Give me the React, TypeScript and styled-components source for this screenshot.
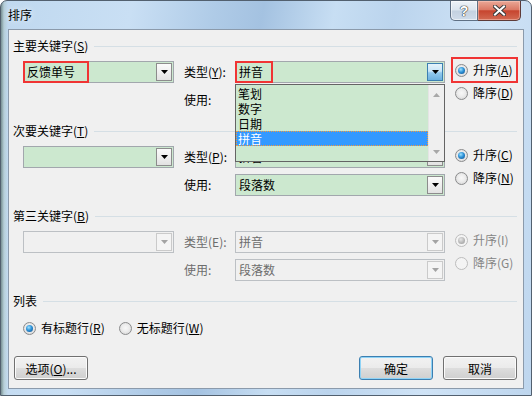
import React from "react";
import styled, { createGlobalStyle } from "styled-components";

const GlobalStyle = createGlobalStyle`
  html, body {
    margin: 0;
    padding: 0;
    background: #ffffff;
  }
  body {
    font-family: "Noto Sans CJK SC", "Microsoft YaHei", sans-serif;
    font-size: 12px;
    color: #000000;
  }
  * {
    box-sizing: border-box;
  }
`;

type RadioOpt = { label: string; hotkey: string; checked?: boolean; marked?: boolean };

type KeySection = {
  title: string;
  hotkey: string;
  disabled?: boolean;
  sortBy: string;
  sortMark?: number;
  typeKey: string;
  typeValue: string;
  typeMark?: number;
  hot?: boolean;
  showList?: boolean;
  useValue: string;
  asc: RadioOpt;
  desc: RadioOpt;
};

// the "使用" combo of the first key sits under the open list, so it shows nothing
const sections: KeySection[] = [
  {
    title: "主要关键字",
    hotkey: "S",
    sortBy: "反馈单号",
    sortMark: 62,
    typeKey: "Y",
    typeValue: "拼音",
    typeMark: 34,
    hot: true,
    showList: true,
    useValue: "",
    asc: { label: "升序", hotkey: "A", checked: true, marked: true },
    desc: { label: "降序", hotkey: "D" },
  },
  {
    title: "次要关键字",
    hotkey: "T",
    sortBy: "",
    typeKey: "P",
    typeValue: "拼音",
    useValue: "段落数",
    asc: { label: "升序", hotkey: "C", checked: true },
    desc: { label: "降序", hotkey: "N" },
  },
  {
    title: "第三关键字",
    hotkey: "B",
    disabled: true,
    sortBy: "",
    typeKey: "E",
    typeValue: "拼音",
    useValue: "段落数",
    asc: { label: "升序", hotkey: "I", checked: true },
    desc: { label: "降序", hotkey: "G" },
  },
];

const listItems = ["笔划", "数字", "日期", "拼音"];

function Arrow({ color = "#000000" }: { color?: string }) {
  return (
    <svg width="7" height="4" viewBox="0 0 7 4">
      <path d="M0 0H7L3.5 4Z" fill={color} />
    </svg>
  );
}

function ScrollArrow({ up }: { up?: boolean }) {
  return (
    <svg width="7" height="4" viewBox="0 0 7 4">
      <path d={up ? "M0 4H7L3.5 0Z" : "M0 0H7L3.5 4Z"} fill="#a8a8a8" />
    </svg>
  );
}

function Combo({
  value,
  disabled,
  hot,
  mark,
  children,
}: {
  value: string;
  disabled?: boolean;
  hot?: boolean;
  mark?: number;
  children?: React.ReactNode;
}) {
  return (
    <ComboBox $disabled={disabled}>
      <ComboText $disabled={disabled}>
        {mark ? <Marked $width={mark}>{value}</Marked> : value}
      </ComboText>
      <ComboButton $disabled={disabled} $hot={hot}>
        <Arrow color={disabled ? "#a3a3a3" : "#000000"} />
      </ComboButton>
      {children}
    </ComboBox>
  );
}

function Radio({ opt, disabled }: { opt: RadioOpt; disabled?: boolean }) {
  return (
    <RadioItem $disabled={disabled} $marked={opt.marked}>
      <RadioCircle $checked={opt.checked} $disabled={disabled} />
      <span>
        {opt.label}({disabled ? opt.hotkey : <u>{opt.hotkey}</u>})
      </span>
    </RadioItem>
  );
}

export default function App() {
  return (
    <>
      <GlobalStyle />
      <Window>
        <TitleBar>
          <Title>排序</Title>
          <CaptionButtons>
            <HelpButton>?</HelpButton>
            <CloseButton>
              <svg width="13" height="11" viewBox="0 0 13 11">
                <path d="M2 1.5L11 9.5M11 1.5L2 9.5" stroke="#3b3b3b" strokeWidth="4" strokeLinecap="square" />
                <path d="M2 1.5L11 9.5M11 1.5L2 9.5" stroke="#ffffff" strokeWidth="2" strokeLinecap="square" />
              </svg>
            </CloseButton>
          </CaptionButtons>
        </TitleBar>

        <Client>
          {sections.map((s) => (
            <Section key={s.title}>
              <SectionHeader>
                {s.title}(<u>{s.hotkey}</u>)
              </SectionHeader>
              <KeyGrid>
                <Combo value={s.sortBy} disabled={s.disabled} mark={s.sortMark} />
                <FieldLabel $disabled={s.disabled}>
                  类型({s.disabled ? s.typeKey : <u>{s.typeKey}</u>}):
                </FieldLabel>
                <Combo value={s.typeValue} disabled={s.disabled} hot={s.hot} mark={s.typeMark}>
                  {s.showList && (
                    <DropList>
                      <ListItems>
                        {listItems.map((item) => (
                          <ListItem key={item} $selected={item === s.typeValue}>
                            {item}
                          </ListItem>
                        ))}
                      </ListItems>
                      <ScrollBar>
                        <ScrollArrow up />
                        <ScrollArrow />
                      </ScrollBar>
                    </DropList>
                  )}
                </Combo>
                <RadioColumn>
                  <Radio opt={s.asc} disabled={s.disabled} />
                  <Radio opt={s.desc} disabled={s.disabled} />
                </RadioColumn>
                <FieldLabel $disabled={s.disabled}>使用:</FieldLabel>
                <Combo value={s.useValue} disabled={s.disabled} />
              </KeyGrid>
            </Section>
          ))}

          <SectionHeader>列表</SectionHeader>
          <RadioRow>
            <Radio opt={{ label: "有标题行", hotkey: "R", checked: true }} />
            <Radio opt={{ label: "无标题行", hotkey: "W" }} />
          </RadioRow>

          <Footer>
            <Button>
              选项(<u>O</u>)...
            </Button>
            <FooterRight>
              <Button $default>确定</Button>
              <Button>取消</Button>
            </FooterRight>
          </Footer>
        </Client>
      </Window>
    </>
  );
}

const Window = styled.div`
  width: 532px;
  height: 396px;
  display: flex;
  flex-direction: column;
  border: 1px solid #52606f;
  border-radius: 7px 7px 0 0;
  overflow: hidden;
  background:
    linear-gradient(90deg, rgba(70, 95, 85, 0.6) 0px, rgba(160, 185, 170, 0.35) 3px, rgba(0, 0, 0, 0) 7px),
    linear-gradient(100deg, #bfd8ef 0%, #c9dff4 22%, #afcbe7 36%, #a4c2e1 44%, #c7def3 56%, #bbd4ed 66%, #cfe3f6 82%, #bed6ee 100%);
`;

const TitleBar = styled.div`
  height: 28px;
  flex: none;
  display: flex;
  align-items: flex-start;
  padding-left: 7px;
`;

const Title = styled.div`
  margin-top: 5px;
  line-height: 18px;
  font-size: 12px;
  text-shadow: 0 0 6px rgba(255, 255, 255, 0.9);
`;

const CaptionButtons = styled.div`
  margin-left: auto;
  margin-right: 10px;
  display: flex;
`;

const HelpButton = styled.div`
  width: 28px;
  height: 20px;
  border: 1px solid #5f7084;
  border-top: none;
  border-radius: 0 0 0 5px;
  background: linear-gradient(#eef3f8 0%, #dbe5ef 48%, #c3d1e0 52%, #d0dcea 100%);
  box-shadow: inset 0 0 0 1px rgba(255, 255, 255, 0.55);
  display: flex;
  align-items: center;
  justify-content: center;
  font-family: "Liberation Sans", sans-serif;
  font-weight: bold;
  font-size: 14px;
  color: #ffffff;
  text-shadow: 0 0 1px #2e2e2e, 0 0 1px #2e2e2e, 0 0 1px #2e2e2e;
`;

const CloseButton = styled.div`
  width: 43px;
  height: 20px;
  border: 1px solid #5e3b38;
  border-left: none;
  border-top: none;
  border-radius: 0 0 5px 0;
  background: linear-gradient(#eaa897 0%, #db7a66 45%, #c7452f 52%, #d26a52 100%);
  box-shadow: inset 0 0 0 1px rgba(255, 210, 200, 0.45);
  display: flex;
  align-items: center;
  justify-content: center;
`;

const Client = styled.div`
  flex: 1;
  margin: 0 7px 6px;
  background: #f0f0f0;
  border: 1px solid #8b9aab;
  padding: 9px 6px 8px 4px;
  display: flex;
  flex-direction: column;
`;

const Section = styled.section`
  margin-bottom: 13px;
`;

const SectionHeader = styled.div`
  display: flex;
  align-items: center;
  height: 14px;
  line-height: 14px;
  white-space: nowrap;

  &::after {
    content: "";
    flex: 1;
    height: 1px;
    margin-left: 6px;
    background: #d5dfe5;
  }
`;

const KeyGrid = styled.div`
  display: grid;
  margin: 8px 0 0 10px;
  grid-template-columns: 151px 61px 210px 1fr;
  grid-template-rows: 22px 22px;
  row-gap: 6px;
`;

const FieldLabel = styled.div<{ $disabled?: boolean }>`
  grid-column: 2;
  align-self: center;
  padding-left: 10px;
  line-height: 16px;
  white-space: nowrap;
  color: ${(p) => (p.$disabled ? "#6d6d6d" : "#000000")};
`;

const ComboBox = styled.div<{ $disabled?: boolean }>`
  position: relative;
  display: flex;
  height: 22px;
  border: 1px solid ${(p) => (p.$disabled ? "#bcc0c4" : "#a2a7ad")};
  background: ${(p) => (p.$disabled ? "#f0f0f0" : "#cce8cf")};
`;

const ComboText = styled.div<{ $disabled?: boolean }>`
  flex: 1;
  display: flex;
  align-items: center;
  padding-left: 3px;
  line-height: 16px;
  white-space: nowrap;
  color: ${(p) => (p.$disabled ? "#6d6d6d" : "#000000")};
`;

const Marked = styled.span<{ $width: number }>`
  display: inline-flex;
  align-items: center;
  width: ${(p) => p.$width}px;
  height: 18px;
  margin-left: -2px;
  padding-left: 2px;
  outline: 2px solid #f03434;
`;

const ComboButton = styled.div<{ $disabled?: boolean; $hot?: boolean }>`
  width: 16px;
  margin: 1px;
  display: flex;
  align-items: center;
  justify-content: center;
  border: 1px solid
    ${(p) => (p.$hot ? "#3c7fb1" : p.$disabled ? "#cacaca" : "#8c8c8c")};
  background: ${(p) =>
    p.$hot
      ? "linear-gradient(#e6f3fb 0%, #c9e5f7 45%, #92c9ec 55%, #6db1df 100%)"
      : p.$disabled
        ? "#f4f4f4"
        : "linear-gradient(#fbfbfb 0%, #efefef 50%, #e2e2e2 100%)"};
`;

const DropList = styled.div`
  position: absolute;
  top: calc(100% + 2px);
  left: -1px;
  z-index: 2;
  width: 210px;
  height: 78px;
  display: flex;
  border: 1px solid #646464;
  background: #cce8cf;
`;

const ListItems = styled.div`
  flex: 1;
  padding-top: 1px;
`;

const ListItem = styled.div<{ $selected?: boolean }>`
  height: 15px;
  line-height: 15px;
  padding-left: 2px;
  color: ${(p) => (p.$selected ? "#ffffff" : "#000000")};
  background: ${(p) => (p.$selected ? "#3399ff" : "transparent")};
  outline: ${(p) => (p.$selected ? "1px dotted #f39a3c" : "none")};
  outline-offset: -1px;
`;

const ScrollBar = styled.div`
  width: 16px;
  display: flex;
  flex-direction: column;
  align-items: center;
  justify-content: space-between;
  padding: 8px 0 7px;
  background: #efefef;
  border-left: 1px solid #e4e4e4;
`;

const RadioColumn = styled.div`
  grid-column: 4;
  grid-row: 1 / span 2;
  display: flex;
  flex-direction: column;
  gap: 5px;
  padding-left: 10px;
`;

const RadioRow = styled.div`
  display: flex;
  gap: 12px;
  margin: 11px 0 0 10px;
`;

const RadioItem = styled.label<{ $disabled?: boolean; $marked?: boolean }>`
  display: flex;
  align-items: center;
  gap: 5px;
  height: 18px;
  width: fit-content;
  padding-right: 2px;
  line-height: 16px;
  white-space: nowrap;
  color: ${(p) => (p.$disabled ? "#858585" : "#000000")};
  outline: ${(p) => (p.$marked ? "2px solid #f03434" : "none")};
  outline-offset: 2px;
`;

const RadioCircle = styled.span<{ $checked?: boolean; $disabled?: boolean }>`
  width: 13px;
  height: 13px;
  flex: none;
  border-radius: 50%;
  display: flex;
  align-items: center;
  justify-content: center;
  border: 1px solid ${(p) => (p.$disabled ? "#bdbdbd" : "#8a8b8c")};
  background: ${(p) =>
    p.$disabled
      ? "#f4f4f4"
      : "radial-gradient(circle at 50% 45%, #f8f8f8 0%, #ececec 45%, #cfcfcf 100%)"};

  &::after {
    content: "";
    display: ${(p) => (p.$checked ? "block" : "none")};
    width: 7px;
    height: 7px;
    border-radius: 50%;
    background: ${(p) =>
      p.$disabled
        ? "radial-gradient(circle at 40% 35%, #e6e6e6 0%, #b3b3b3 60%, #9a9a9a 100%)"
        : "radial-gradient(circle at 40% 35%, #9fe2ff 0%, #2f93d8 45%, #0d4a86 100%)"};
  }
`;

const Footer = styled.div`
  margin-top: auto;
  display: flex;
  align-items: center;
  padding-left: 1px;
`;

const FooterRight = styled.div`
  margin-left: auto;
  display: flex;
  gap: 10px;
`;

const Button = styled.button<{ $default?: boolean }>`
  width: 74px;
  height: 24px;
  padding: 0;
  font-family: inherit;
  font-size: 12px;
  color: #000000;
  border: 1px solid ${(p) => (p.$default ? "#3c7fb1" : "#707070")};
  border-radius: 3px;
  background: linear-gradient(#f2f2f2 0%, #ebebeb 48%, #dddddd 52%, #cfcfcf 100%);
  box-shadow: inset 0 0 0 1px ${(p) => (p.$default ? "#8fd3f6" : "#fbfbfb")};
`;
